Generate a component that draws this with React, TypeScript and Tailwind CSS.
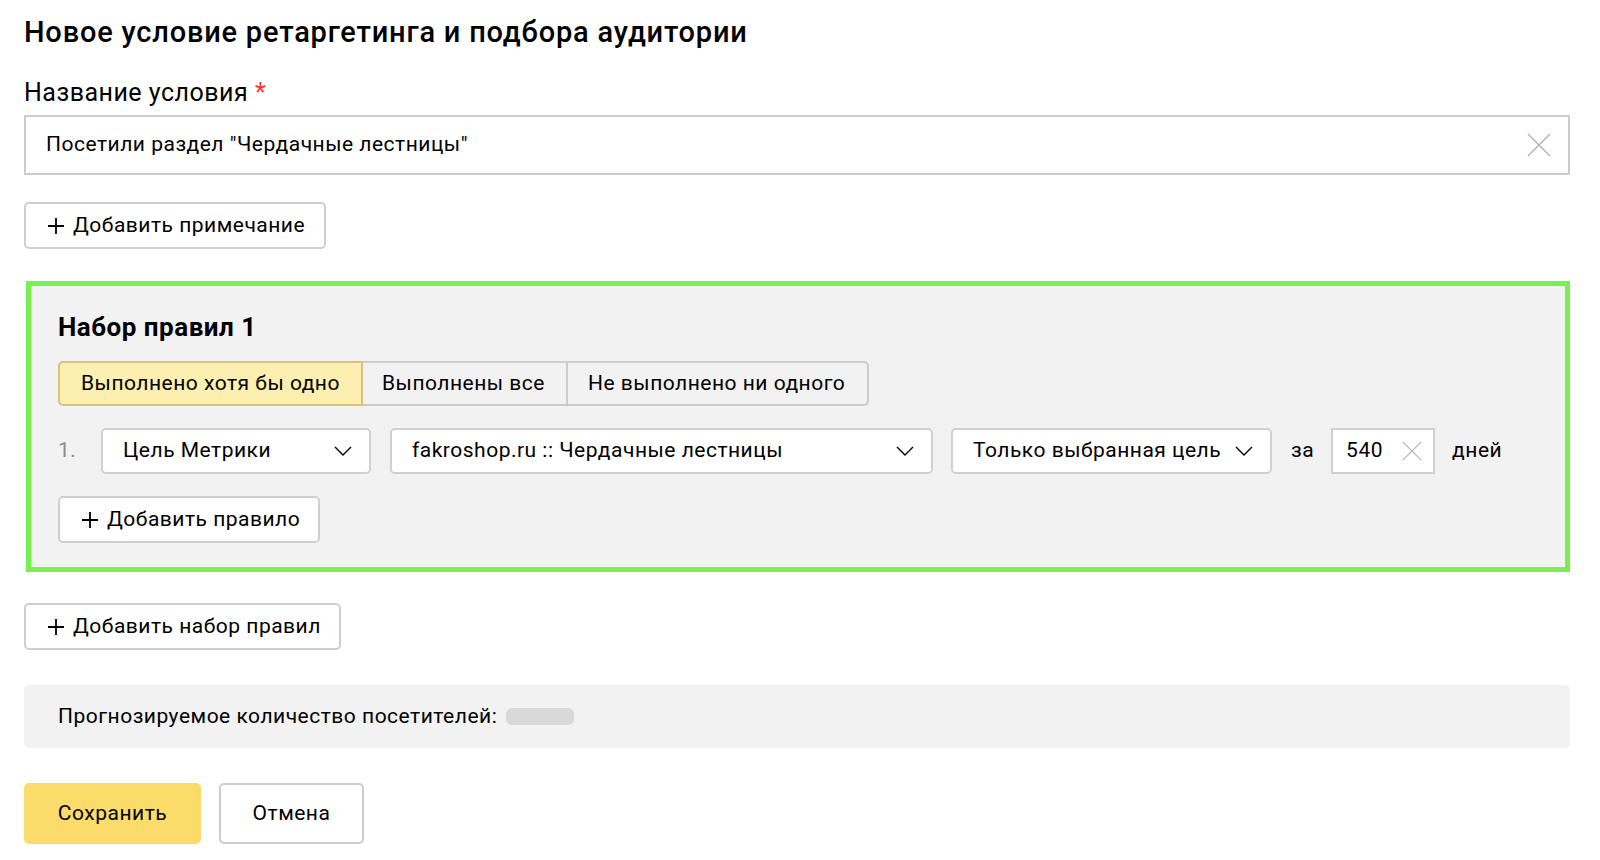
import React from 'react';

const font = { fontFamily: 'Roboto, "Liberation Sans", Arial, sans-serif' };

function Chevron() {
  return (
    <svg width="18" height="10" viewBox="0 0 18 10" fill="none" stroke="#000" strokeWidth="1.4">
      <path d="M1 1l8 8 8-8" />
    </svg>
  );
}

function Cross({ size = 24 }: { size?: number }) {
  return (
    <svg width={size} height={size} viewBox="0 0 24 24" fill="none" stroke="#b5b5b5" strokeWidth="1.5">
      <path d="M1 1l22 22M23 1L1 23" />
    </svg>
  );
}

function Plus() {
  return (
    <svg width="16" height="16" viewBox="0 0 16 16" fill="none" stroke="#000" strokeWidth="1.8">
      <path d="M8 0v16M0 8h16" />
    </svg>
  );
}

function AddButton({ label, className }: { label: string; className: string }) {
  return (
    <button
      className={`flex items-center gap-[9px] pl-[22px] h-[47px] border-2 border-[#cfcfcf] rounded-[5px] bg-white text-[21px] tracking-[0.5px] text-black ${className}`}
    >
      <Plus />
      <span>{label}</span>
    </button>
  );
}

function Select({ label, className }: { label: string; className: string }) {
  return (
    <div
      className={`flex items-center justify-between h-[46px] pl-[20px] pr-[17px] bg-white border-2 border-[#d0d0d0] rounded-[5px] text-[21px] tracking-[0.5px] text-black ${className}`}
    >
      <span>{label}</span>
      <Chevron />
    </div>
  );
}

export default function App() {
  return (
    <div className="w-[1600px] h-[860px] bg-white overflow-hidden" style={font}>
      <div className="pl-[24px] pr-[30px] flex flex-col">
        {/* Title */}
        <h1 className="mt-[16px] text-[29px] leading-[32px] font-medium text-black tracking-[0.8px]">
          Новое условие ретаргетинга и подбора аудитории
        </h1>

        {/* Name field */}
        <div className="mt-[30px] text-[25px] leading-[30px] tracking-[0.5px] text-black">
          Название условия <span className="text-[#ff3333]">*</span>
        </div>
        <div className="mt-[7px] h-[60px] flex items-center justify-between border-2 border-[#cccccc] bg-white pl-[20px] pr-[17px]">
          <span className="text-[21px] tracking-[0.5px] text-black">Посетили раздел "Чердачные лестницы"</span>
          <Cross />
        </div>

        <AddButton label="Добавить примечание" className="mt-[27px] w-[302px]" />

        {/* Rule set */}
        <div className="mt-[32px] ml-[2px] border-[5px] border-[#76f14d] bg-[#f2f2f2] pt-[25px] pb-[24px] pl-[27px]">
          <div className="text-[26px] leading-[32px] font-bold tracking-[0.5px] text-black">Набор правил 1</div>

          <div className="mt-[18px] flex h-[45px] text-[21px] tracking-[0.5px] text-black">
            <div className="w-[305px] flex items-center pl-[21px] bg-[#fdefb0] border-2 border-[#d9c27a] rounded-l-[5px]">
              Выполнено хотя бы одно
            </div>
            <div className="w-[205px] flex items-center pl-[19px] border-y-2 border-r-2 border-[#cccccc]">
              Выполнены все
            </div>
            <div className="w-[301px] flex items-center pl-[20px] border-y-2 border-r-2 border-[#cccccc] rounded-r-[5px]">
              Не выполнено ни одного
            </div>
          </div>

          <div className="mt-[22px] flex items-center h-[46px] text-[21px] tracking-[0.5px]">
            <span className="w-[43px] text-[#8c8c8c]">1.</span>
            <Select label="Цель Метрики" className="w-[270px]" />
            <Select label="fakroshop.ru :: Чердачные лестницы" className="ml-[19px] w-[543px]" />
            <Select label="Только выбранная цель" className="ml-[18px] w-[321px]" />
            <span className="ml-[19px] text-black">за</span>
            <div className="ml-[17px] w-[104px] h-[46px] flex items-center justify-between pl-[13px] pr-[11px] bg-white border-2 border-[#d0d0d0]">
              <span className="text-black">540</span>
              <Cross size={20} />
            </div>
            <span className="ml-[17px] text-black">дней</span>
          </div>

          <AddButton label="Добавить правило" className="mt-[22px] w-[262px] bg-[#f2f2f2]" />
        </div>

        <AddButton label="Добавить набор правил" className="mt-[31px] w-[317px]" />

        {/* Forecast */}
        <div className="mt-[35px] h-[63px] bg-[#f2f2f2] rounded-[5px] flex items-center pl-[34px] text-[21px] tracking-[0.5px] text-black">
          <span>Прогнозируемое количество посетителей:</span>
          <span className="ml-[9px] w-[68px] h-[17px] rounded-[6px] bg-[#d9d9d9]" />
        </div>

        {/* Actions */}
        <div className="mt-[35px] flex gap-[18px]">
          <button className="w-[177px] h-[61px] bg-[#fbdc6a] rounded-[5px] text-[21px] tracking-[0.5px] text-black">
            Сохранить
          </button>
          <button className="w-[145px] h-[61px] bg-white border-2 border-[#cccccc] rounded-[5px] text-[21px] tracking-[0.5px] text-black">
            Отмена
          </button>
        </div>
      </div>
    </div>
  );
}
